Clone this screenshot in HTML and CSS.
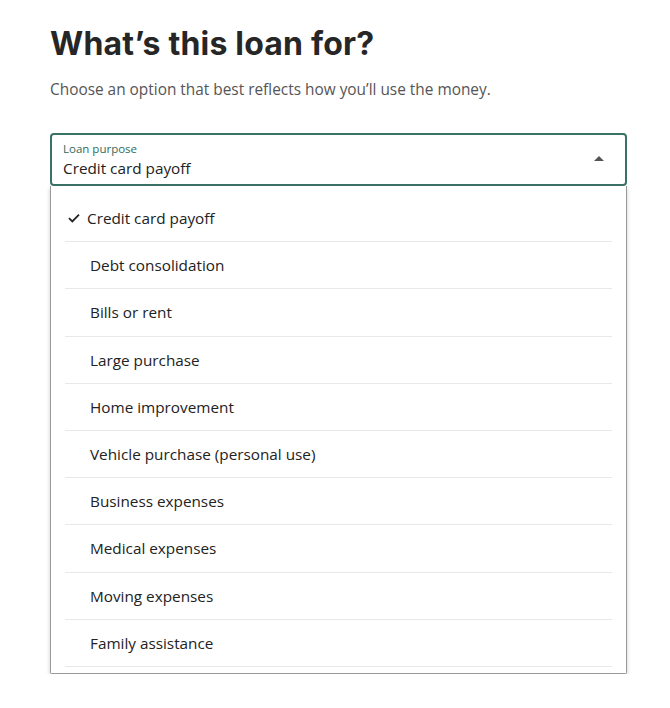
FILE: index.html
```html
<!DOCTYPE html>
<html lang="en">
<head>
<meta charset="utf-8">
<title>What's this loan for?</title>
<link rel="stylesheet" href="styles.css">
</head>
<body>
<main class="page">
  <h1 class="title">What’s this loan for?</h1>
  <p class="subtitle">Choose an option that best reflects how you’ll use the money.</p>
  <div class="select">
    <div class="select-field">
      <div class="select-text">
        <span class="select-label">Loan purpose</span>
        <span class="select-value">Credit card payoff</span>
      </div>
      <span class="select-arrow"></span>
    </div>
    <ul class="options">
      <li class="option selected"><svg class="check" viewBox="0 0 12 10" width="12" height="10"><path d="M1 5.2 L4.3 8.4 L11 1.6" fill="none" stroke="#222" stroke-width="1.8"/></svg>Credit card payoff</li>
      <li class="option">Debt consolidation</li>
      <li class="option">Bills or rent</li>
      <li class="option">Large purchase</li>
      <li class="option">Home improvement</li>
      <li class="option">Vehicle purchase (personal use)</li>
      <li class="option">Business expenses</li>
      <li class="option">Medical expenses</li>
      <li class="option">Moving expenses</li>
      <li class="option">Family assistance</li>
    </ul>
  </div>
</main>
</body>
</html>
```
FILE: styles.css
```css
* { box-sizing: border-box; }
html, body { margin: 0; padding: 0; background: #fff; }
body { font-family: "Open Sans", "Noto Sans", sans-serif; color: #222; }
.page { padding: 24px 43px 0 50px; }
.title {
  margin: 0;
  font-family: "Inter", "Noto Sans", sans-serif;
  font-weight: 700;
  font-size: 32px;
  line-height: 40px;
  color: #262626;
  letter-spacing: 0.2px;
}
.subtitle {
  margin: 15px 0 0;
  font-size: 15.4px;
  line-height: 22px;
  color: #555;
}
.select { margin-top: 32px; }
.select-field {
  display: flex;
  align-items: center;
  justify-content: space-between;
  height: 53px;
  border: 2px solid #3b7268;
  border-radius: 4px;
  padding: 0 21px 0 11px;
}
.select-text { display: flex; flex-direction: column; }
.select-label { font-size: 11.5px; line-height: 16px; color: #2f6b60; }
.select-value { font-size: 15.3px; line-height: 22px; color: #222; }
.select-arrow {
  width: 0; height: 0;
  border-left: 5px solid transparent;
  border-right: 5px solid transparent;
  border-bottom: 5px solid #555;
  margin-bottom: 3px;
}
.options {
  list-style: none;
  margin: 0;
  padding: 9px 14px 6px;
  border: 1px solid #9a9a9a;
  border-top: none;
  box-shadow: 0 2px 4px rgba(0,0,0,0.2);
  border-radius: 0 0 2px 2px;
}
.option {
  display: flex;
  align-items: center;
  height: 47.2px;
  padding-left: 25px;
  border-bottom: 1px solid #e8e8e8;
  font-size: 15.3px;
  color: #222;
}
.option.selected { padding-left: 3px; }
.check { margin-right: 7px; }
```
